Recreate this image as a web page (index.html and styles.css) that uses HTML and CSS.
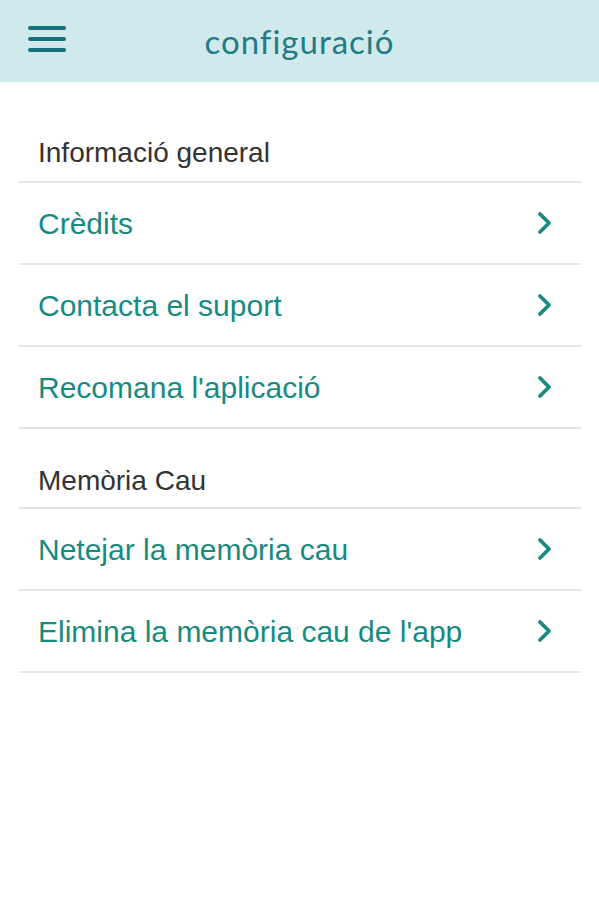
FILE: index.html
```html
<!DOCTYPE html>
<html lang="ca">
<head>
    <meta charset="UTF-8">
    <meta name="viewport" content="width=device-width, initial-scale=1.0">
    <title>configuració</title>
    <link rel="stylesheet" href="styles.css">
</head>
<body>
    <div class="topbar">
        <button class="menu-btn" aria-label="menu">
            <span></span><span></span><span></span>
        </button>
        <h1 class="title">configuració</h1>
    </div>

    <div class="settings">
        <div class="section-title first">Informació general</div>
        <a class="row" href="#"><span>Crèdits</span><svg class="chev" viewBox="0 0 16 24"><path d="M3 3 L12 12 L3 21"/></svg></a>
        <a class="row" href="#"><span>Contacta el suport</span><svg class="chev" viewBox="0 0 16 24"><path d="M3 3 L12 12 L3 21"/></svg></a>
        <a class="row" href="#"><span>Recomana l'aplicació</span><svg class="chev" viewBox="0 0 16 24"><path d="M3 3 L12 12 L3 21"/></svg></a>

        <div class="section-title">Memòria Cau</div>
        <a class="row" href="#"><span>Netejar la memòria cau</span><svg class="chev" viewBox="0 0 16 24"><path d="M3 3 L12 12 L3 21"/></svg></a>
        <a class="row" href="#"><span>Elimina la memòria cau de l'app</span><svg class="chev" viewBox="0 0 16 24"><path d="M3 3 L12 12 L3 21"/></svg></a>
    </div>
</body>
</html>
```

FILE: styles.css
```css
body {
    margin: 0;
    font-family: "Liberation Sans", Arial, sans-serif;
    background-color: #fff;
}
.topbar {
    height: 82px;
    background-color: #d0e9ec;
    display: flex;
    align-items: center;
    justify-content: center;
    position: relative;
}
.menu-btn {
    position: absolute;
    left: 28px;
    top: 26px;
    width: 38px;
    height: 26px;
    padding: 0;
    border: none;
    background: none;
    display: flex;
    flex-direction: column;
    justify-content: space-between;
}
.menu-btn span {
    display: block;
    height: 4px;
    border-radius: 2px;
    background-color: #16717b;
}
.title {
    margin: 0;
    font-family: Lato, sans-serif;
    font-weight: 400;
    font-size: 33px;
    color: #217c86;
    letter-spacing: 1px;
}
.settings {
    padding: 0 18px 0 19px;
}
.section-title {
    box-sizing: border-box;
    height: 80px;
    padding: 36px 0 0 19px;
    font-size: 28px;
    color: #333;
    border-bottom: 2px solid #e6e6e6;
}
.section-title.first {
    height: 101px;
    padding-top: 55px;
}
.row {
    display: flex;
    align-items: center;
    justify-content: space-between;
    height: 80px;
    padding: 0 28px 0 19px;
    border-bottom: 2px solid #e6e6e6;
    text-decoration: none;
    font-size: 30px;
    color: #198a80;
}
.row span {
    padding-top: 2px;
}
.chev {
    width: 16px;
    height: 24px;
    fill: none;
    stroke: #198a80;
    stroke-width: 3.8;
    stroke-linecap: round;
    stroke-linejoin: round;
}
```
